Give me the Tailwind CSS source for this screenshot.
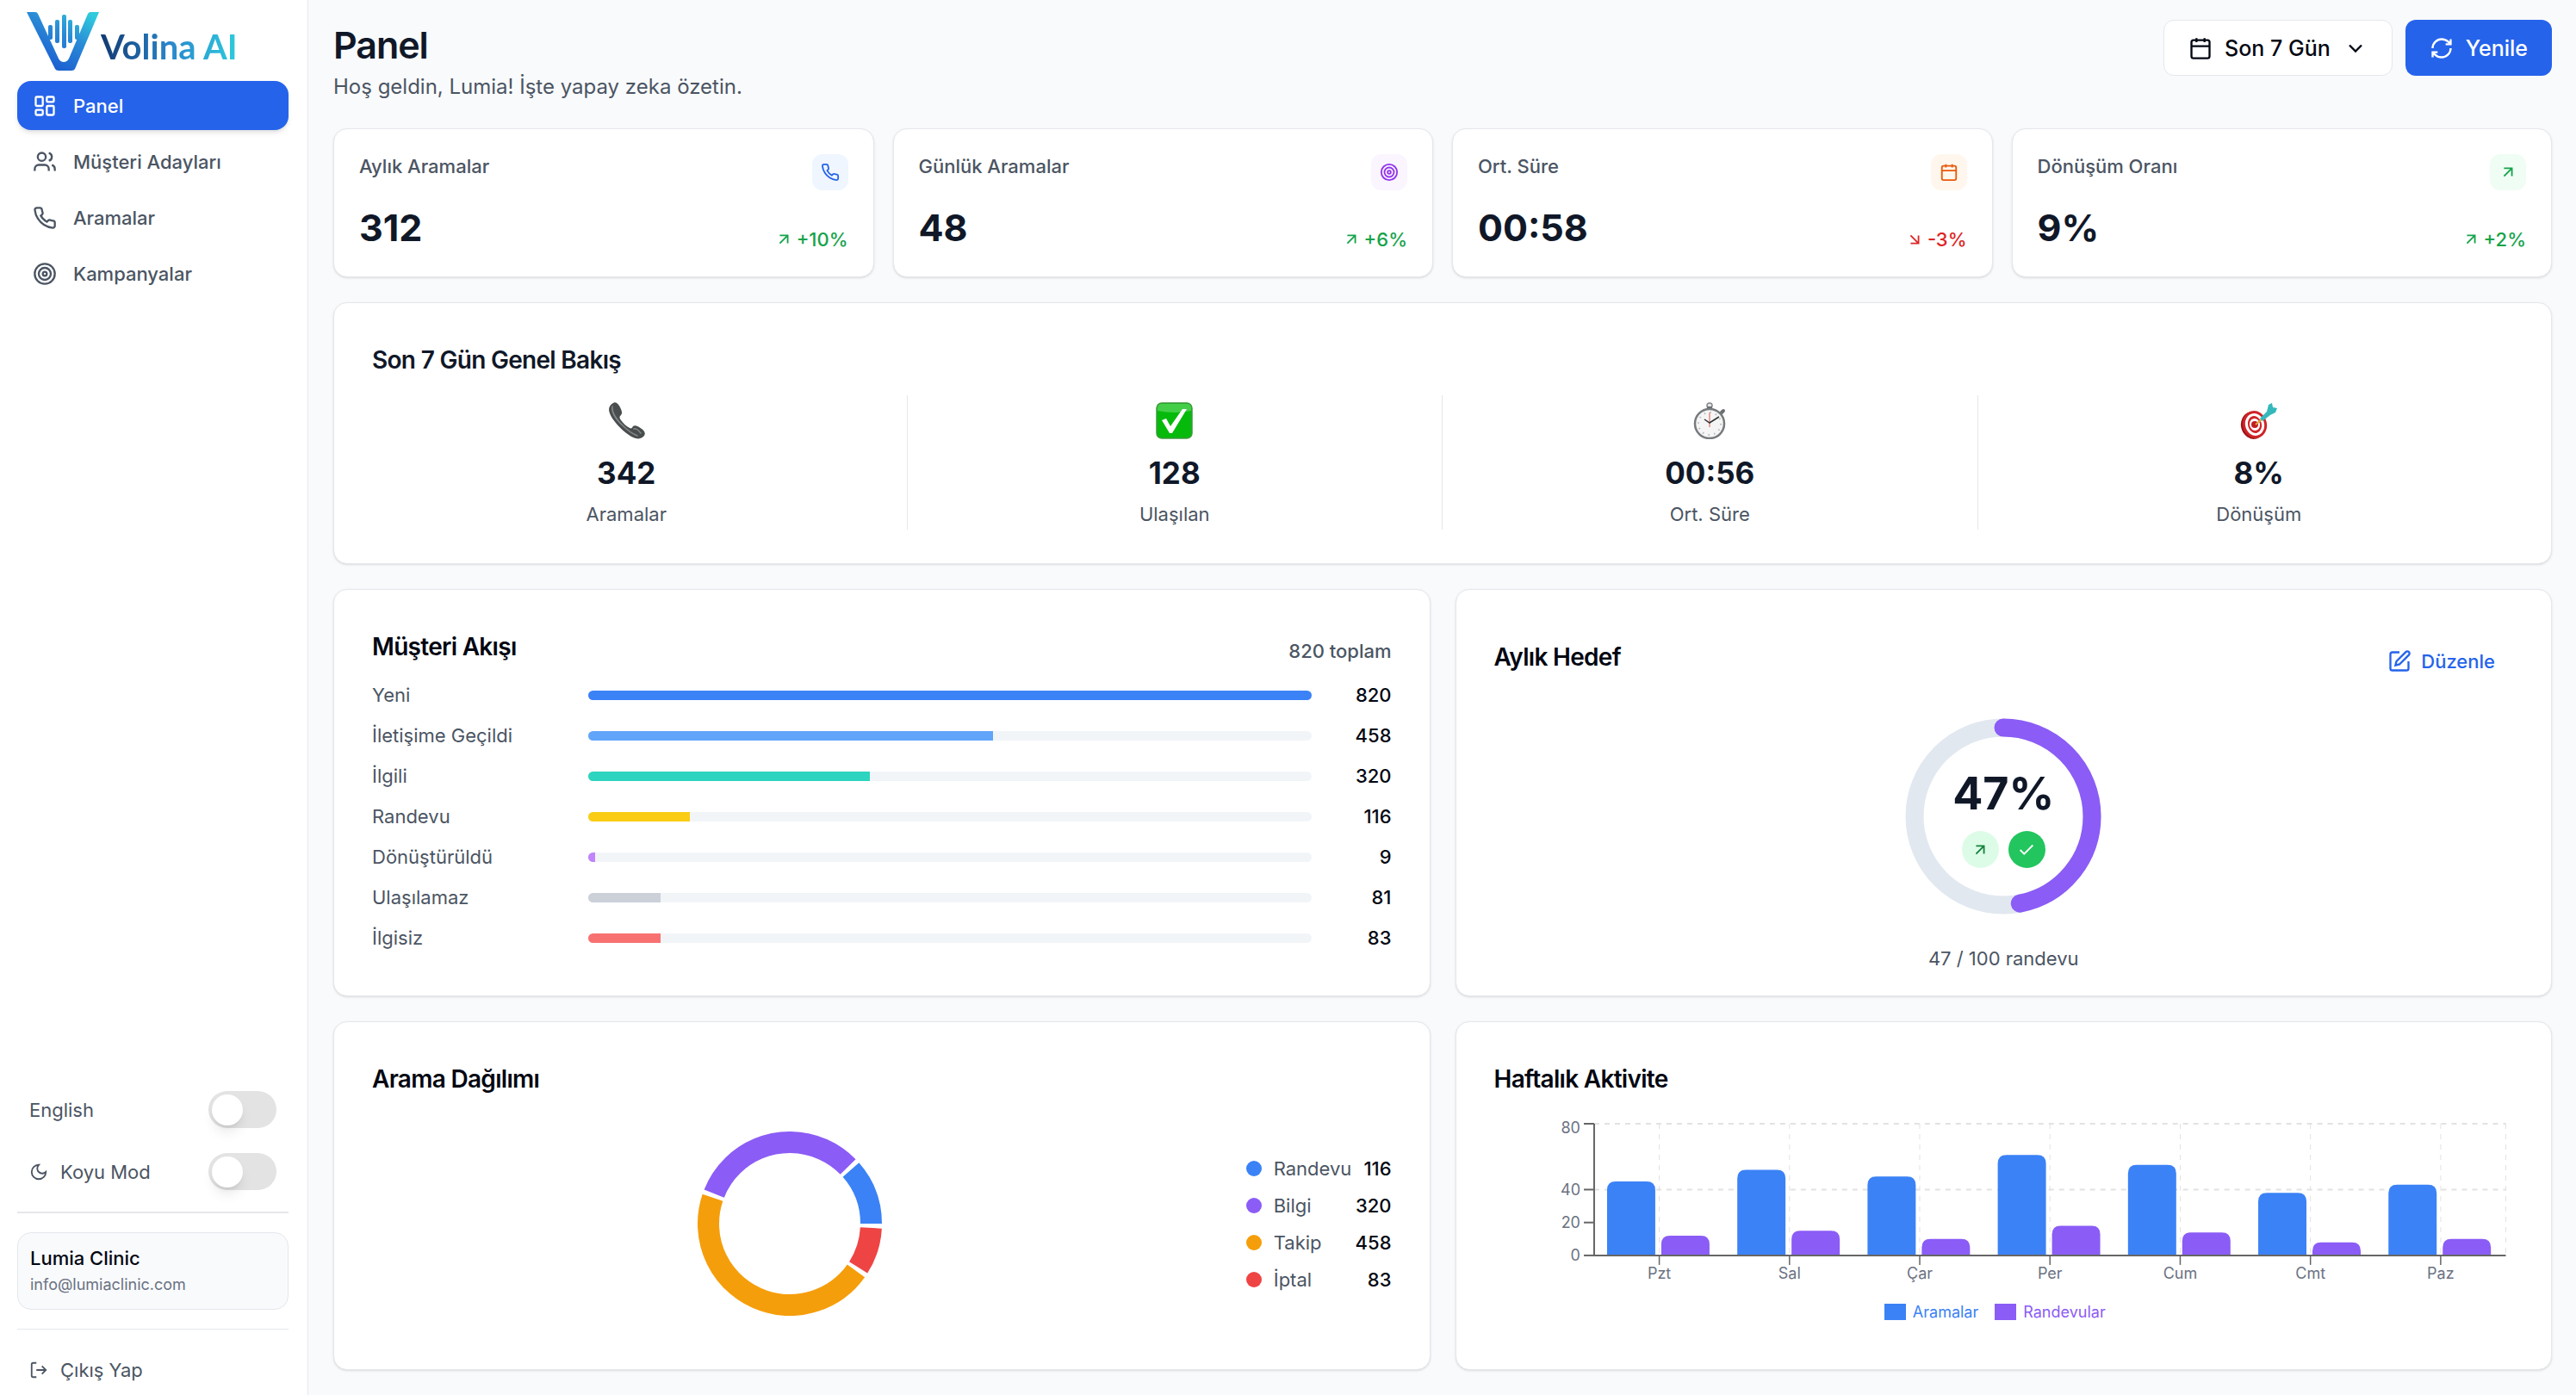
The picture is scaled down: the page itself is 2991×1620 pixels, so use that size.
<!DOCTYPE html>
<html lang="tr">
  <head>
    <meta charset="UTF-8" />
    <meta name="viewport" content="width=device-width, initial-scale=1.0" />
    <title>Volina AI - Panel</title>
    <script src="https://cdn.jsdelivr.net/npm/@tailwindcss/browser@4"></script>
  </head>
  <body class="flex min-h-screen bg-[#f9fafc] font-[Inter,sans-serif] text-[22px] leading-[28px] text-[#4b5563]">
    <!-- Icon set -->
    <svg class="hidden">
      <defs>
        <symbol id="i-dashboard" viewBox="0 0 24 24"><rect x="3" y="3" width="7" height="9" rx="1" /><rect x="14" y="3" width="7" height="5" rx="1" /><rect x="14" y="12" width="7" height="9" rx="1" /><rect x="3" y="16" width="7" height="5" rx="1" /></symbol>
        <symbol id="i-users" viewBox="0 0 24 24"><path d="M16 21v-2a4 4 0 0 0-4-4H6a4 4 0 0 0-4 4v2" /><circle cx="9" cy="7" r="4" /><path d="M22 21v-2a4 4 0 0 0-3-3.87M16 3.13a4 4 0 0 1 0 7.75" /></symbol>
        <symbol id="i-phone" viewBox="0 0 24 24"><path d="M22 16.92v3a2 2 0 0 1-2.18 2 19.79 19.79 0 0 1-8.63-3.07 19.5 19.5 0 0 1-6-6 19.79 19.79 0 0 1-3.07-8.67A2 2 0 0 1 4.11 2h3a2 2 0 0 1 2 1.72 12.84 12.84 0 0 0 .7 2.81 2 2 0 0 1-.45 2.11L8.09 9.91a16 16 0 0 0 6 6l1.27-1.27a2 2 0 0 1 2.11-.45 12.84 12.84 0 0 0 2.81.7A2 2 0 0 1 22 16.92z" /></symbol>
        <symbol id="i-target" viewBox="0 0 24 24"><circle cx="12" cy="12" r="10" /><circle cx="12" cy="12" r="6" /><circle cx="12" cy="12" r="2" /></symbol>
        <symbol id="i-calendar" viewBox="0 0 24 24"><path d="M8 2v4M16 2v4M3 10h18" /><rect x="3" y="4" width="18" height="18" rx="2" /></symbol>
        <symbol id="i-chevron" viewBox="0 0 24 24"><path d="m6 9 6 6 6-6" /></symbol>
        <symbol id="i-refresh" viewBox="0 0 24 24"><path d="M3 12a9 9 0 0 1 9-9 9.75 9.75 0 0 1 6.74 2.74L21 8M21 3v5h-5M21 12a9 9 0 0 1-9 9 9.75 9.75 0 0 1-6.74-2.74L3 16M8 16H3v5" /></symbol>
        <symbol id="i-up" viewBox="0 0 24 24"><path d="M7 7h10v10M7 17 17 7" /></symbol>
        <symbol id="i-down" viewBox="0 0 24 24"><path d="m7 7 10 10M17 7v10H7" /></symbol>
        <symbol id="i-edit" viewBox="0 0 24 24"><path d="M12 3H5a2 2 0 0 0-2 2v14a2 2 0 0 0 2 2h14a2 2 0 0 0 2-2v-7" /><path d="M18.375 2.625a2.121 2.121 0 1 1 3 3L12 15l-4 1 1-4Z" /></symbol>
        <symbol id="i-check" viewBox="0 0 24 24"><path d="M20 6 9 17l-5-5" /></symbol>
        <symbol id="i-moon" viewBox="0 0 24 24"><path d="M12 3a6 6 0 0 0 9 9 9 9 0 1 1-9-9Z" /></symbol>
        <symbol id="i-logout" viewBox="0 0 24 24"><path d="M9 21H5a2 2 0 0 1-2-2V5a2 2 0 0 1 2-2h4M16 17l5-5-5-5M21 12H9" /></symbol>
      </defs>
    </svg>

    <aside class="sticky top-0 flex h-screen w-[358px] shrink-0 flex-col border-r border-gray-200 bg-white pr-[22px] pl-5 font-medium">
      <a href="#" class="flex h-[94px] items-start pt-[14px] pl-[11px]">
        <svg class="h-[68px] w-[84px] shrink-0" viewBox="0 0 84 68">
          <defs>
            <linearGradient id="logo-fill" x1="30" y1="68" x2="70" y2="0" gradientUnits="userSpaceOnUse">
              <stop offset="0" stop-color="#1a5bd0" />
              <stop offset="0.55" stop-color="#2a8ad6" />
              <stop offset="1" stop-color="#2fcbdd" />
            </linearGradient>
          </defs>
          <path fill="url(#logo-fill)" d="M0 0H10Q12 0 13 2L37 54Q39 58 43 58Q47 58 49 54L71 2Q72 0 74 0H84L56 66Q55 68 52 68H37Q34 68 33 66Z" />
          <g fill="url(#logo-fill)">
            <rect x="25" y="15" width="5" height="17" rx="2" />
            <rect x="33" y="9" width="5" height="27" rx="2" />
            <rect x="41" y="3" width="5" height="39" rx="2" />
            <rect x="48" y="9" width="5" height="27" rx="2" />
            <rect x="56" y="15" width="5" height="17" rx="2" />
          </g>
        </svg>
        <span class="mt-5 ml-[2px] bg-linear-to-r from-[#123a72] via-[#2a86cb] to-[#2fcbdd] bg-clip-text font-[Lato,sans-serif] text-[40px] leading-[40px] font-bold text-transparent">Volina AI</span>
      </a>

      <nav class="flex flex-col gap-2">
        <a href="#" class="flex h-[57px] items-center gap-[19px] rounded-2xl bg-[#2563eb] pl-[18px] text-white shadow-md">
          <svg class="size-7 fill-none stroke-current stroke-2"><use href="#i-dashboard" /></svg>Panel
        </a>
        <a href="#" class="flex h-[57px] items-center gap-[19px] rounded-2xl pl-[18px]">
          <svg class="size-7 fill-none stroke-current stroke-2"><use href="#i-users" /></svg>Müşteri Adayları
        </a>
        <a href="#" class="flex h-[57px] items-center gap-[19px] rounded-2xl pl-[18px]">
          <svg class="size-7 fill-none stroke-current stroke-2"><use href="#i-phone" /></svg>Aramalar
        </a>
        <a href="#" class="flex h-[57px] items-center gap-[19px] rounded-2xl pl-[18px]">
          <svg class="size-7 fill-none stroke-current stroke-2"><use href="#i-target" /></svg>Kampanyalar
        </a>
      </nav>

      <div class="mt-auto flex flex-col gap-[29px] px-[14px] pb-[25px] font-normal">
        <label class="flex items-center justify-between">
          English
          <input type="checkbox" class="h-[43px] w-[79px] appearance-none rounded-full bg-[#e3e3e3] p-1 before:block before:size-[36px] before:rounded-full before:bg-white before:shadow-lg" />
        </label>
        <label class="flex items-center justify-between">
          <span class="flex items-center gap-[14px]">
            <svg class="size-[22px] fill-none stroke-current stroke-2"><use href="#i-moon" /></svg>Koyu Mod
          </span>
          <input type="checkbox" class="h-[43px] w-[79px] appearance-none rounded-full bg-[#e3e3e3] p-1 before:block before:size-[36px] before:rounded-full before:bg-white before:shadow-lg" />
        </label>
      </div>

      <div class="border-t-2 border-gray-200 pt-[22px]">
        <div class="flex h-[90px] flex-col justify-center rounded-2xl border border-gray-200 bg-[#f9fafc] px-[14px]">
          <p class="leading-[32px] text-gray-950">Lumia Clinic</p>
          <p class="text-[18px] leading-[30px] font-normal text-gray-500">info@lumiaclinic.com</p>
        </div>
      </div>

      <div class="mt-[22px] border-t border-gray-200 pt-[33px] pb-[15px]">
        <button class="flex items-center gap-[14px] pl-[14px] font-normal">
          <svg class="size-[22px] fill-none stroke-current stroke-2"><use href="#i-logout" /></svg>Çıkış Yap
        </button>
      </div>
    </aside>

    <main class="flex min-w-0 flex-1 flex-col gap-[29px] pr-[28px] pb-[28px] pl-[29px]">
      <header class="-mb-[3px] flex items-start justify-between pt-[23px]">
        <div>
          <h1 class="text-[43px] leading-[58px] font-semibold tracking-tight text-gray-900">Panel</h1>
          <p class="pb-[2px] text-[24px] leading-[40px]">Hoş geldin, Lumia! İşte yapay zeka özetin.</p>
        </div>
        <div class="flex gap-[15px] text-[25px] font-medium">
          <label class="flex h-[65px] items-center rounded-xl border border-gray-200 bg-white px-[28px] text-gray-950">
            <svg class="mr-[14px] size-[28px] fill-none stroke-current stroke-2"><use href="#i-calendar" /></svg>
            <select class="field-sizing-content appearance-none" aria-label="Tarih aralığı">
              <option>Son 7 Gün</option>
            </select>
            <svg class="ml-[15px] size-[28px] fill-none stroke-current stroke-2"><use href="#i-chevron" /></svg>
          </label>
          <button class="flex h-[65px] items-center gap-[14px] rounded-xl bg-[#2563eb] px-[28px] text-white">
            <svg class="size-[28px] fill-none stroke-current stroke-2"><use href="#i-refresh" /></svg>Yenile
          </button>
        </div>
      </header>

      <!-- Stat cards -->
      <section class="grid grid-cols-4 gap-[22px]">
        <div class="rounded-2xl border border-gray-200 bg-white p-[29px] shadow-sm">
          <div class="flex items-start justify-between">
            <h2 class="font-medium">Aylık Aramalar</h2>
            <span class="flex size-[42px] items-center justify-center rounded-xl bg-[#eff6ff] text-[#2563eb]"><svg class="size-[22px] fill-none stroke-current stroke-2"><use href="#i-phone" /></svg></span>
          </div>
          <div class="mt-[15px] flex items-end justify-between">
            <p class="text-[43px] leading-[56px] font-bold text-gray-900">312</p>
            <p class="flex items-center gap-1 font-medium text-[#16a34a]"><svg class="size-[22px] fill-none stroke-current stroke-2"><use href="#i-up" /></svg>+10%</p>
          </div>
        </div>
        <div class="rounded-2xl border border-gray-200 bg-white p-[29px] shadow-sm">
          <div class="flex items-start justify-between">
            <h2 class="font-medium">Günlük Aramalar</h2>
            <span class="flex size-[42px] items-center justify-center rounded-xl bg-[#faf5ff] text-[#9333ea]"><svg class="size-[22px] fill-none stroke-current stroke-2"><use href="#i-target" /></svg></span>
          </div>
          <div class="mt-[15px] flex items-end justify-between">
            <p class="text-[43px] leading-[56px] font-bold text-gray-900">48</p>
            <p class="flex items-center gap-1 font-medium text-[#16a34a]"><svg class="size-[22px] fill-none stroke-current stroke-2"><use href="#i-up" /></svg>+6%</p>
          </div>
        </div>
        <div class="rounded-2xl border border-gray-200 bg-white p-[29px] shadow-sm">
          <div class="flex items-start justify-between">
            <h2 class="font-medium">Ort. Süre</h2>
            <span class="flex size-[42px] items-center justify-center rounded-xl bg-[#fff7ed] text-[#ea580c]"><svg class="size-[22px] fill-none stroke-current stroke-2"><use href="#i-calendar" /></svg></span>
          </div>
          <div class="mt-[15px] flex items-end justify-between">
            <p class="text-[43px] leading-[56px] font-bold text-gray-900">00:58</p>
            <p class="flex items-center gap-1 font-medium text-[#dc2626]"><svg class="size-[22px] fill-none stroke-current stroke-2"><use href="#i-down" /></svg>-3%</p>
          </div>
        </div>
        <div class="rounded-2xl border border-gray-200 bg-white p-[29px] shadow-sm">
          <div class="flex items-start justify-between">
            <h2 class="font-medium">Dönüşüm Oranı</h2>
            <span class="flex size-[42px] items-center justify-center rounded-xl bg-[#f0fdf4] text-[#16a34a]"><svg class="size-[22px] fill-none stroke-current stroke-2"><use href="#i-up" /></svg></span>
          </div>
          <div class="mt-[15px] flex items-end justify-between">
            <p class="text-[43px] leading-[56px] font-bold text-gray-900">9%</p>
            <p class="flex items-center gap-1 font-medium text-[#16a34a]"><svg class="size-[22px] fill-none stroke-current stroke-2"><use href="#i-up" /></svg>+2%</p>
          </div>
        </div>
      </section>

      <!-- 7 day overview -->
      <section class="rounded-2xl border border-gray-200 bg-white px-[44px] pt-[44px] pb-[39px] shadow-sm">
        <h2 class="text-[28px] leading-[44px] font-semibold tracking-tight text-gray-900">Son 7 Gün Genel Bakış</h2>
        <div class="mt-[19px] grid grid-cols-4 divide-x divide-gray-200 text-center">
          <div class="flex flex-col items-center pt-2 pr-[30px]">
            <svg class="size-[43px]" viewBox="0 0 43 43">
              <path fill="#4a4d4e" d="M6 1C9 -1 12 2 14 6C16 10 17 13 15 15C13 17 13 18 15 21C18 25 21 28 25 30C27 31 28 30 29 28C31 26 35 28 39 31C43 34 44 37 41 40C37 44 31 43 24 38C15 32 5 21 2 13C0 8 1 4 6 1Z" />
              <path fill="none" stroke="#83888a" stroke-width="1.5" stroke-linecap="round" d="M5 5C4 12 10 21 18 28C24 34 29 37 34 39M30 31C32 30 36 33 38 36" />
            </svg>
            <p class="mt-[17px] text-[35px] leading-[44px] font-bold text-gray-900">342</p>
            <p class="mt-3 pb-1">Aramalar</p>
          </div>
          <div class="flex flex-col items-center px-[30px] pt-2">
            <svg class="size-[43px]" viewBox="0 0 43 43">
              <rect x="1" y="1" width="41" height="41" rx="6" fill="#06ba0c" stroke="#3c9a3c" stroke-width="1.5" />
              <path fill="#5fd763" d="M7 2H36Q41 2 41 7V10Q22 14 2 10V7Q2 2 7 2Z" opacity="0.7" />
              <path fill="#fff" d="M7 21L12 19L17 28L31 8H36L19 36H16Z" />
            </svg>
            <p class="mt-[17px] text-[35px] leading-[44px] font-bold text-gray-900">128</p>
            <p class="mt-3 pb-1">Ulaşılan</p>
          </div>
          <div class="flex flex-col items-center px-[30px] pt-2">
            <svg class="size-[43px]" viewBox="0 0 43 43">
              <circle cx="21" cy="4" r="3" fill="#e5e7e8" stroke="#85898b" stroke-width="1.5" />
              <rect x="18" y="5" width="6" height="4" fill="#6b6f71" />
              <path stroke="#6b6f71" stroke-width="4" stroke-linecap="round" d="M34 13L37 10" />
              <circle cx="21" cy="25" r="17" fill="#f5f5f5" stroke="#777b7e" stroke-width="2.5" />
              <circle cx="21" cy="25" r="13" fill="none" stroke="#b6b9bb" stroke-width="2" stroke-dasharray="1.5 5.3" />
              <path stroke="#e58b83" stroke-width="1.5" d="M21 12V29" />
              <path fill="none" stroke="#2f3234" stroke-width="1.5" d="M15 20L21 24L32 17" />
            </svg>
            <p class="mt-[17px] text-[35px] leading-[44px] font-bold text-gray-900">00:56</p>
            <p class="mt-3 pb-1">Ort. Süre</p>
          </div>
          <div class="flex flex-col items-center pt-2 pl-[31px]">
            <svg class="size-[43px]" viewBox="0 0 43 43">
              <ellipse cx="15" cy="27" rx="14" ry="16" fill="#9c1417" transform="rotate(-15 15 27)" />
              <ellipse cx="17" cy="26" rx="14" ry="16" fill="#cf2429" transform="rotate(-15 17 26)" />
              <ellipse cx="17" cy="26" rx="11" ry="13" fill="#fff" transform="rotate(-15 17 26)" />
              <ellipse cx="17" cy="26" rx="8" ry="10" fill="#cf2429" transform="rotate(-15 17 26)" />
              <ellipse cx="17" cy="26" rx="6" ry="7" fill="#fff" transform="rotate(-15 17 26)" />
              <circle cx="17" cy="26" r="4" fill="#c01e23" />
              <path stroke="#e0a63a" stroke-width="2" d="M18 26L25 20" />
              <path fill="#35b8bb" d="M23 19L31 11L33 3L37 1L38 6L43 7L41 12L35 15L26 22Z" />
            </svg>
            <p class="mt-[17px] text-[35px] leading-[44px] font-bold text-gray-900">8%</p>
            <p class="mt-3 pb-1">Dönüşüm</p>
          </div>
        </div>
      </section>

      <section class="grid grid-cols-2 gap-[29px]">
        <!-- Lead funnel -->
        <div class="rounded-2xl border border-gray-200 bg-white px-[44px] pt-[44px] pb-[53px] shadow-sm">
          <div class="flex items-end justify-between">
            <h2 class="text-[28px] leading-[44px] font-semibold tracking-tight text-gray-950">Müşteri Akışı</h2>
            <span class="leading-[34px] font-medium">820 toplam</span>
          </div>
          <ul id="funnel" class="mt-5 flex flex-col gap-[19px]"></ul>
        </div>

        <!-- Monthly goal -->
        <div class="rounded-2xl border border-gray-200 bg-white px-[44px] pt-[44px] pb-[28px] shadow-sm">
          <div class="flex h-[68px] items-center justify-between">
            <h2 class="text-[28px] leading-[44px] font-semibold tracking-tight text-gray-950">Aylık Hedef</h2>
            <button class="flex h-[58px] items-center gap-[11px] self-end px-[21px] font-medium text-[#2563eb]">
              <svg class="size-[28px] fill-none stroke-current stroke-2"><use href="#i-edit" /></svg>Düzenle
            </button>
          </div>
          <div class="mt-[37px] flex flex-col items-center">
            <div class="relative size-[228px]">
              <svg class="size-full -rotate-90 fill-none" viewBox="0 0 228 228">
                <circle cx="114" cy="114" r="103" stroke="#e2e8f0" stroke-width="21" />
                <circle cx="114" cy="114" r="103" stroke="#8b5cf6" stroke-width="21" stroke-linecap="round" pathLength="100" stroke-dasharray="47 100" />
              </svg>
              <div class="absolute inset-0 flex flex-col items-center pt-[62px]">
                <p class="text-[52px] leading-[52px] font-bold text-gray-900">47%</p>
                <div class="mt-[17px] flex gap-[11px]">
                  <span class="flex size-[43px] items-center justify-center rounded-full bg-[#dcfce7] text-[#15803d]"><svg class="size-[22px] fill-none stroke-current stroke-2"><use href="#i-up" /></svg></span>
                  <span class="flex size-[43px] items-center justify-center rounded-full bg-[#22c55e] text-white"><svg class="size-[22px] fill-none stroke-current stroke-2"><use href="#i-check" /></svg></span>
                </div>
              </div>
            </div>
            <p class="mt-[37px]">47 / 100 randevu</p>
          </div>
        </div>

        <!-- Call distribution -->
        <div class="rounded-2xl border border-gray-200 bg-white px-[44px] pt-[44px] pb-[62px] shadow-sm">
          <h2 class="text-[28px] leading-[44px] font-semibold tracking-tight text-gray-950">Arama Dağılımı</h2>
          <div class="mt-[39px] flex items-center gap-[45px]">
            <div class="flex flex-1 justify-center">
              <svg id="donut" class="size-[214px] -scale-y-100 fill-none" viewBox="0 0 214 214"></svg>
            </div>
            <ul class="flex flex-col gap-[15px]">
              <li class="flex items-center"><span class="mr-[14px] size-[18px] rounded-full bg-[#3b82f6]"></span>Randevu<b class="ml-auto pl-[14px] font-medium text-gray-950">116</b></li>
              <li class="flex items-center"><span class="mr-[14px] size-[18px] rounded-full bg-[#8b5cf6]"></span>Bilgi<b class="ml-auto pl-[14px] font-medium text-gray-950">320</b></li>
              <li class="flex items-center"><span class="mr-[14px] size-[18px] rounded-full bg-[#f59e0b]"></span>Takip<b class="ml-auto pl-[14px] font-medium text-gray-950">458</b></li>
              <li class="flex items-center"><span class="mr-[14px] size-[18px] rounded-full bg-[#ef4444]"></span>İptal<b class="ml-auto pl-[14px] font-medium text-gray-950">83</b></li>
            </ul>
          </div>
        </div>

        <!-- Weekly activity -->
        <div class="rounded-2xl border border-gray-200 bg-white px-[44px] pt-[44px] shadow-sm">
          <h2 class="text-[28px] leading-[44px] font-semibold tracking-tight text-gray-950">Haftalık Aktivite</h2>
          <svg id="weekly" class="mt-[19px] w-full" viewBox="0 0 1184 200"></svg>
          <div class="mt-[18px] flex justify-center gap-[19px] pr-5 text-[18px] leading-[24px]">
            <span class="flex items-center gap-2 text-[#3b82f6]"><i class="h-[19px] w-[25px] bg-[#3b82f6]"></i>Aramalar</span>
            <span class="flex items-center gap-2 text-[#8b5cf6]"><i class="h-[19px] w-[25px] bg-[#8b5cf6]"></i>Randevular</span>
          </div>
        </div>
      </section>
    </main>

    <script>
      // Funnel rows: label, count, bar width %, colour
      const funnel = [
        ["Yeni", 820, 100, "bg-[#3b82f6]"],
        ["İletişime Geçildi", 458, 56, "bg-[#60a5fa]"],
        ["İlgili", 320, 39, "bg-[#2dd4bf]"],
        ["Randevu", 116, 14, "bg-[#facc15]"],
        ["Dönüştürüldü", 9, 1, "bg-[#c084fc]"],
        ["Ulaşılamaz", 81, 10, "bg-[#cbd0d9]"],
        ["İlgisiz", 83, 10, "bg-[#f87171]"],
      ];
      document.getElementById("funnel").innerHTML = funnel
        .map(
          ([label, count, pct, color]) => `
          <li class="flex items-center">
            <span class="w-[251px]">${label}</span>
            <div class="h-[11px] flex-1 overflow-hidden rounded-full bg-[#f2f5f8]">
              <div class="h-full ${color}" style="width:${pct}%"></div>
            </div>
            <span class="w-[93px] text-right font-medium text-gray-950">${count}</span>
          </li>`
        )
        .join("");

      // Donut slices, counter-clockwise from 3 o'clock with a 3 degree gap
      const slices = [
        [116, "#3b82f6"],
        [320, "#8b5cf6"],
        [458, "#f59e0b"],
        [83, "#ef4444"],
      ];
      const total = slices.reduce((sum, s) => sum + s[0], 0);
      let angle = 0;
      document.getElementById("donut").innerHTML = slices
        .map(([value, color]) => {
          const sweep = (value / total) * 348;
          const arc = `<circle cx="107" cy="107" r="94.5" stroke="${color}" stroke-width="25" pathLength="360" stroke-dasharray="${sweep} 360" transform="rotate(${angle} 107 107)" />`;
          angle += sweep + 3;
          return arc;
        })
        .join("");

      // Weekly bars
      const days = [
        ["Pzt", 45, 12],
        ["Sal", 52, 15],
        ["Çar", 48, 10],
        ["Per", 61, 18],
        ["Cum", 55, 14],
        ["Cmt", 38, 8],
        ["Paz", 43, 10],
      ];
      const left = 116, right = 1175, base = 164, top80 = 11;
      const step = (right - left) / days.length;
      const y = (v) => base - (v * (base - top80)) / 80;
      const bar = (x, v, color) =>
        `<path fill="${color}" d="M${x} ${base}V${y(v) + 10}q0 -10 10 -10h36q10 0 10 10V${base}Z" />`;
      let grid = "", bars = "", axis = "";
      [80, 40].forEach((v) => {
        grid += `<path stroke="#e2e2e2" stroke-width="2" stroke-dasharray="6 6" d="M${left} ${y(v)}H${right}" />`;
      });
      days.forEach(([day, calls, meets], i) => {
        const x = left + i * step;
        const mid = x + step / 2;
        grid += `<path stroke="#e2e2e2" stroke-width="1" stroke-dasharray="6 6" d="M${mid} ${top80}V${base}" />`;
        bars += bar(x + 15, calls, "#3b82f6") + bar(x + 78, meets, "#8b5cf6");
        axis += `<path stroke="#666" stroke-width="1.5" d="M${mid} ${base}v11" />`;
        axis += `<text x="${mid}" y="191" text-anchor="middle" class="fill-gray-500 text-[18px]">${day}</text>`;
      });
      grid += `<path stroke="#e2e2e2" stroke-width="1" stroke-dasharray="6 6" d="M${right} ${top80}V${base}" />`;
      [[80, 22], [40, 94], [20, 132], [0, 170]].forEach(([v, ty]) => {
        axis += `<path stroke="#666" stroke-width="2" d="M${left - 12} ${y(v)}h12" />`;
        axis += `<text x="${left - 16}" y="${ty}" text-anchor="end" class="fill-gray-500 text-[18px]">${v}</text>`;
      });
      axis += `<path stroke="#666" stroke-width="2" fill="none" d="M${left} ${top80}V${base}H${right}" />`;
      document.getElementById("weekly").innerHTML = grid + bars + axis;
    </script>
  </body>
</html>
